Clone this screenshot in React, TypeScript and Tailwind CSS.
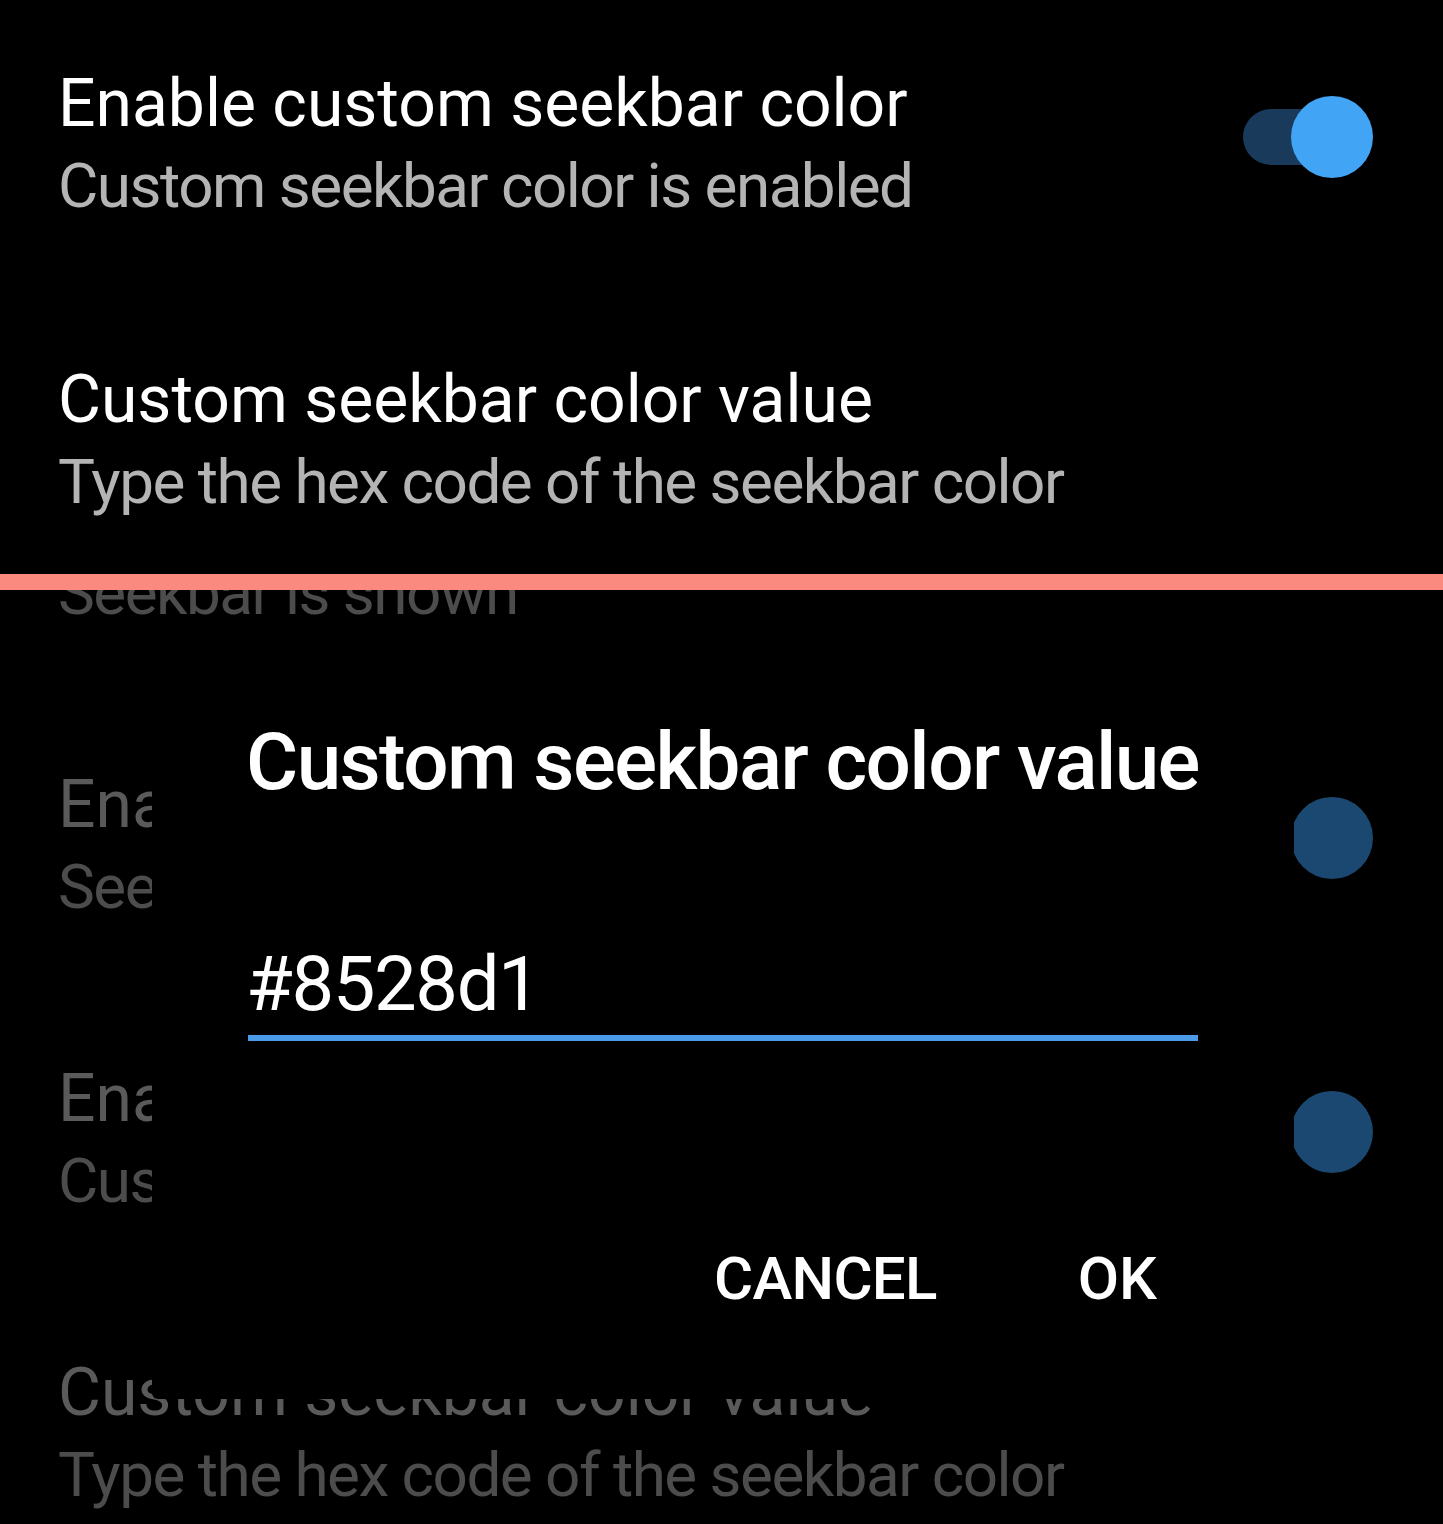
import React from 'react';

type RowProps = {
  title: string;
  subtitle: string;
  toggle?: 'on' | 'dim' | null;
  dim?: boolean;
  className?: string;
};

const Toggle = ({ state }: { state: 'on' | 'dim' }) => (
  <div className="relative mt-[96px] h-[82px] w-[130px] shrink-0">
    {state === 'on' && (
      <div className="absolute left-0 top-[13px] h-[56px] w-[100px] rounded-full bg-[#1a3a5b]" />
    )}
    <div
      className={
        state === 'on'
          ? 'absolute right-0 top-0 h-[82px] w-[82px] rounded-full bg-[#42a4f4]'
          : 'absolute right-0 top-0 h-[82px] w-[82px] rounded-full bg-[#1b4870]'
      }
    />
  </div>
);

const Row = ({ title, subtitle, toggle = null, dim = false, className = 'h-[296px]' }: RowProps) => (
  <div className={`flex shrink-0 items-start justify-between pl-[58px] pr-[70px] ${className}`}>
    <div className="flex flex-col pt-[64px]">
      <p className={`whitespace-nowrap text-[66px] leading-[80px] ${dim ? 'text-[#5a5a5a]' : 'text-white'}`}>{title}</p>
      <p className={`mt-[2px] whitespace-nowrap text-[62px] leading-[80px] tracking-[-1.5px] ${dim ? 'text-[#4c4c4c]' : 'text-[#b4b4b4]'}`}>{subtitle}</p>
    </div>
    {toggle && <Toggle state={toggle} />}
  </div>
);

export default function App() {
  return (
    <div className="flex h-[1524px] w-[1443px] flex-col overflow-hidden bg-black font-['Roboto','Noto_Sans',sans-serif]">
      {/* top capture */}
      <div className="flex h-[574px] shrink-0 flex-col overflow-hidden">
        <Row title="Enable custom seekbar color" subtitle="Custom seekbar color is enabled" toggle="on" />
        <Row title="Custom seekbar color value" subtitle="Type the hex code of the seekbar color" />
      </div>

      <div className="h-[16px] shrink-0 bg-[#fa8a80]" />

      {/* bottom capture: dialog over dimmed list */}
      <div className="relative flex-1 overflow-hidden">
        <div className="-mt-[183px] flex flex-col">
          <Row title="Show seekbar" subtitle="Seekbar is shown" toggle="dim" dim className="h-[294px]" />
          <Row title="Enable seekbar tapping" subtitle="Seekbar tapping is enabled" toggle="dim" dim className="h-[294px]" />
          <Row title="Enable custom seekbar color" subtitle="Custom seekbar color is enabled" toggle="dim" dim className="h-[294px]" />
          <Row title="Custom seekbar color value" subtitle="Type the hex code of the seekbar color" dim className="h-[294px]" />
        </div>

        <div className="absolute left-[152px] top-[46px] flex w-[1142px] flex-col rounded-[6px] bg-black px-[96px] pb-[84px] pt-[78px]">
          <h2 className="-ml-[2px] whitespace-nowrap text-[80px] font-medium leading-[96px] tracking-[-1.6px] text-white">Custom seekbar color value</h2>
          <div className="mt-[129px] border-b-[6px] border-[#4c9be8] pb-[6px]">
            <p className="-ml-[2px] text-[76px] leading-[90px] tracking-[-1.4px] text-white">#8528d1</p>
          </div>
          <div className="mt-[202px] flex justify-end gap-[61px] pr-[1px]">
            <button className="px-[40px] text-[60px] font-medium leading-[72px] tracking-[-0.7px] text-white">CANCEL</button>
            <button className="px-[40px] text-[60px] font-medium leading-[72px] text-white">OK</button>
          </div>
        </div>
      </div>
    </div>
  );
}
